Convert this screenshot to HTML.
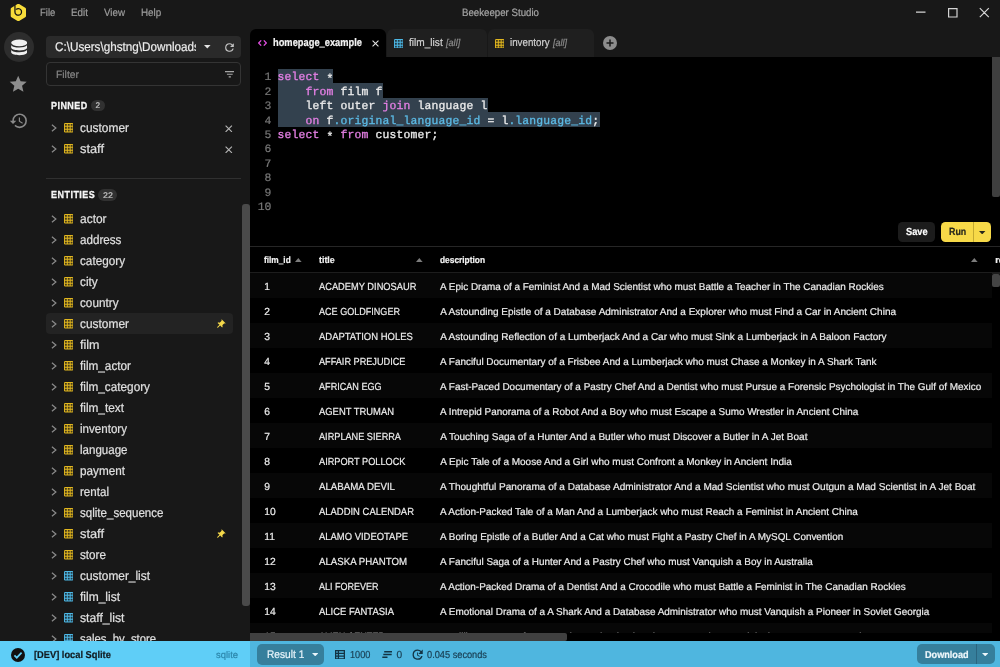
<!DOCTYPE html>
<html><head><meta charset="utf-8"><title>Beekeeper Studio</title>
<style>
*{box-sizing:border-box;margin:0;padding:0}
html,body{width:1000px;height:667px;overflow:hidden;background:#181818;font-family:"Liberation Sans",sans-serif;color:#e6e6e6}
.abs{position:absolute}
.t{position:absolute;white-space:pre;line-height:1;-webkit-text-stroke:.2px;text-rendering:geometricPrecision}
#app{position:relative;width:1000px;height:667px;overflow:hidden;background:#181818;will-change:transform}
.ln{position:absolute;left:250px;width:21.3px;text-align:right;font-family:"Liberation Mono",monospace;font-size:11.4px;line-height:1;color:#787878;text-rendering:geometricPrecision;-webkit-text-stroke:.2px}
.cl{position:absolute;left:277.5px;font-family:"Liberation Mono",monospace;font-size:11.4px;letter-spacing:.16px;line-height:1;color:#ececec;white-space:pre;text-rendering:geometricPrecision;-webkit-text-stroke:.3px}
.sel{position:absolute;left:277.5px;background:#33414e}
.k{color:#e680e6}
.as{position:relative;top:2.2px}
.p{color:#5cbbe6}
</style></head>
<body><div id="app">
<!-- title bar -->
<svg class="abs" style="left:10px;top:3px" width="17" height="19" viewBox="0 0 17 19"><path d="M8.350 2.400L14.500 5.950V13.050L8.350 16.600L2.200 13.050V5.950Z" fill="#f7dc3a" stroke="#f7dc3a" stroke-width="3" stroke-linejoin="round"/><path d="M4.950 2.500V8.900A3.300 3.300 0 1 0 6.360 6.200" stroke="#121212" stroke-width="1.250" fill="none" stroke-linecap="round"/></svg>
<span class="t" style="left:39.70px;top:8px;font-size:10.6px;transform:scaleX(0.8959);transform-origin:0 0;color:#9c9c9c;">File</span><span class="t" style="left:70.90px;top:8px;font-size:10.6px;transform:scaleX(0.9252);transform-origin:0 0;color:#9c9c9c;">Edit</span><span class="t" style="left:104.00px;top:8px;font-size:10.6px;transform:scaleX(0.9218);transform-origin:0 0;color:#9c9c9c;">View</span><span class="t" style="left:141.20px;top:8px;font-size:10.6px;transform:scaleX(0.9313);transform-origin:0 0;color:#9c9c9c;">Help</span>
<span class="t" style="left:461.60px;top:8px;font-size:10.6px;transform:scaleX(0.9141);transform-origin:0 0;color:#a6a6a6;">Beekeeper Studio</span>
<svg class="abs" style="left:912px;top:4px" width="84" height="18" viewBox="0 0 84 18"><path d="M4 8.100h9.500M36.600 4.600h8.400v8.400h-8.400zM67.800 4.200l9 9M76.800 4.200l-9 9" fill="none" stroke="#d4d4d4" stroke-width="1.200"/></svg>
<!-- rail -->
<div class="abs" style="left:3.500px;top:32px;width:30px;height:30px;border-radius:15px;background:#2d2d2d"></div>
<svg class="abs" style="left:10.500px;top:39px" width="16.500" height="17" viewBox="0 0 17 17"><g fill="#f0f0f0"><ellipse cx="8.500" cy="3.700" rx="8.300" ry="3.500"/><path d="M.2 5.800c1 2 4.600 2.700 8.300 2.700s7.300-.7 8.300-2.700v3c-1 2-4.600 2.700-8.300 2.700s-7.300-.7-8.300-2.700z"/><path d="M.2 10.700c1 2 4.600 2.700 8.300 2.700s7.300-.7 8.300-2.700v3c-1 2-4.600 2.700-8.300 2.700s-7.300-.7-8.300-2.700z"/></g></svg>
<svg class="abs" style="left:8.300px;top:73.500px" width="20.400" height="20.400" viewBox="0 0 24 24"><path fill="#8e8e8e" d="M12 17.270L18.180 21l-1.640-7.030L22 9.240l-7.190-.61L12 2 9.190 8.630 2 9.240l5.460 4.730L5.820 21z"/></svg>
<svg class="abs" style="left:9px;top:110.800px" width="19.600" height="19.600" viewBox="0 0 24 24"><path fill="#8a8a8a" d="M13 3a9 9 0 0 0-9 9H1l3.890 3.890.07.140L9 12H6c0-3.870 3.130-7 7-7s7 3.130 7 7-3.130 7-7 7c-1.930 0-3.680-.79-4.940-2.060l-1.420 1.420A8.954 8.954 0 0 0 13 21a9 9 0 0 0 0-18zm-1 5v5l4.280 2.540.72-1.210-3.500-2.080V8H12z"/></svg>
<!-- sidebar -->
<div class="abs" style="left:46.300px;top:36px;width:194.700px;height:21.800px;border-radius:4px;background:#2a2a2a"></div>
<div class="abs" style="left:54px;top:38px;width:141.900px;height:18px;overflow:hidden"><span class="t" style="left:0.70px;top:3px;font-size:12.7px;transform:scaleX(0.9214);transform-origin:0 0;color:#ececec;">C:\Users\ghstng\Downloads</span></div>
<svg class="abs" style="left:204.200px;top:45px" width="6.600" height="3.600" viewBox="0 0 8 4.400"><path d="M0 0h8L4 4.400z" fill="#e4e4e4"/></svg>
<svg class="abs" style="left:223px;top:40.500px" width="13" height="13" viewBox="0 0 24 24"><path fill="#c4c4c4" d="M17.650 6.350A7.958 7.958 0 0 0 12 4a8 8 0 1 0 7.730 10h-2.080A5.990 5.990 0 0 1 12 18c-3.310 0-6-2.690-6-6s2.690-6 6-6c1.660 0 3.140.69 4.220 1.780L13 11h7V4l-2.350 2.350z"/></svg>
<div class="abs" style="left:46.300px;top:62.300px;width:194.700px;height:23.500px;border:1px solid #343434;border-radius:4px;background:#181818"></div>
<span class="t" style="left:55.70px;top:70px;font-size:10.5px;transform:scaleX(0.9853);transform-origin:0 0;color:#858585;">Filter</span>
<svg class="abs" style="left:224.800px;top:71px" width="9.600" height="6.500" viewBox="0 0 9.600 6.500"><path d="M0 .600h9.600M1.900 3.250h5.800M3.700 5.900h2.200" stroke="#a6a6a6" stroke-width="1.200" fill="none"/></svg>
<span class="t" style="left:51.00px;top:102px;font-size:10.2px;color:#f6f6f6;font-weight:bold;-webkit-text-stroke:.3px;letter-spacing:.53px;transform:scaleX(.88);transform-origin:0 0;">PINNED</span>
<div class="abs" style="left:90.800px;top:99.600px;width:14.200px;height:11.600px;border-radius:5.800px;background:#313131"></div>
<span class="t" style="left:95.50px;top:102px;font-size:8.2px;color:#c4c4c4;">2</span>
<svg class="abs" style="left:51px;top:124.2px" viewBox="0 0 6 8" width="6" height="8"><path d="M.9 .700l4 3.300-4 3.300" fill="none" stroke="#8c8c8c" stroke-width="1.2"/></svg><svg class="abs" style="left:63.8px;top:123.4px" viewBox="0 0 20 20" width="9.5" height="9.5"><rect x="0" y="0" width="20" height="20" rx="2.500" fill="#e2b71f"/><path d="M2 2h4v4h-4zM2 8h4v4h-4zM2 14h4v4h-4zM8 2h4v4h-4zM8 8h4v4h-4zM8 14h4v4h-4zM14 2h4v4h-4zM14 8h4v4h-4zM14 14h4v4h-4z" fill="#181818" fill-opacity=".78"/></svg><span class="t" style="left:80.00px;top:122px;font-size:12.7px;transform:scaleX(0.9389);transform-origin:0 0;color:#e0e0e0;">customer</span><svg class="abs" style="left:225px;top:124.7px" viewBox="0 0 10 10" width="7.5" height="7.5"><path d="M.8 .800l8.400 8.400M9.200 .800L.8 9.200" stroke="#b4b4b4" stroke-width="1.500" fill="none"/></svg>

<svg class="abs" style="left:51px;top:145.1px" viewBox="0 0 6 8" width="6" height="8"><path d="M.9 .700l4 3.300-4 3.300" fill="none" stroke="#8c8c8c" stroke-width="1.2"/></svg><svg class="abs" style="left:63.8px;top:144.3px" viewBox="0 0 20 20" width="9.5" height="9.5"><rect x="0" y="0" width="20" height="20" rx="2.500" fill="#e2b71f"/><path d="M2 2h4v4h-4zM2 8h4v4h-4zM2 14h4v4h-4zM8 2h4v4h-4zM8 8h4v4h-4zM8 14h4v4h-4zM14 2h4v4h-4zM14 8h4v4h-4zM14 14h4v4h-4z" fill="#181818" fill-opacity=".78"/></svg><span class="t" style="left:80.00px;top:143px;font-size:12.7px;transform:scaleX(1.0105);transform-origin:0 0;color:#e0e0e0;">staff</span><svg class="abs" style="left:225px;top:145.6px" viewBox="0 0 10 10" width="7.5" height="7.5"><path d="M.8 .800l8.400 8.400M9.200 .800L.8 9.200" stroke="#b4b4b4" stroke-width="1.500" fill="none"/></svg>

<div class="abs" style="left:46px;top:177.600px;width:195px;height:1px;background:#303030"></div>
<span class="t" style="left:50.80px;top:191px;font-size:10.2px;color:#f6f6f6;font-weight:bold;-webkit-text-stroke:.3px;letter-spacing:.56px;transform:scaleX(.88);transform-origin:0 0;">ENTITIES</span>
<div class="abs" style="left:98.200px;top:188.800px;width:19px;height:11.800px;border-radius:5.900px;background:#313131"></div>
<span class="t" style="left:103.00px;top:192px;font-size:8.2px;transform:scaleX(1.0758);transform-origin:0 0;color:#c4c4c4;">22</span>
<div class="abs" style="left:37px;top:205px;width:205px;height:436px;overflow:hidden"><div class="abs" style="left:-37px;top:-205px;width:250px;height:667px">
<svg class="abs" style="left:51px;top:215px" viewBox="0 0 6 8" width="6" height="8"><path d="M.9 .700l4 3.300-4 3.300" fill="none" stroke="#8c8c8c" stroke-width="1.2"/></svg><svg class="abs" style="left:63.8px;top:214.2px" viewBox="0 0 20 20" width="9.5" height="9.5"><rect x="0" y="0" width="20" height="20" rx="2.500" fill="#e2b71f"/><path d="M2 2h4v4h-4zM2 8h4v4h-4zM2 14h4v4h-4zM8 2h4v4h-4zM8 8h4v4h-4zM8 14h4v4h-4zM14 2h4v4h-4zM14 8h4v4h-4zM14 14h4v4h-4z" fill="#181818" fill-opacity=".78"/></svg><span class="t" style="left:80.00px;top:213px;font-size:12.7px;transform:scaleX(0.9426);transform-origin:0 0;color:#e0e0e0;">actor</span>
<svg class="abs" style="left:51px;top:236px" viewBox="0 0 6 8" width="6" height="8"><path d="M.9 .700l4 3.300-4 3.300" fill="none" stroke="#8c8c8c" stroke-width="1.2"/></svg><svg class="abs" style="left:63.8px;top:235.2px" viewBox="0 0 20 20" width="9.5" height="9.5"><rect x="0" y="0" width="20" height="20" rx="2.500" fill="#e2b71f"/><path d="M2 2h4v4h-4zM2 8h4v4h-4zM2 14h4v4h-4zM8 2h4v4h-4zM8 8h4v4h-4zM8 14h4v4h-4zM14 2h4v4h-4zM14 8h4v4h-4zM14 14h4v4h-4z" fill="#181818" fill-opacity=".78"/></svg><span class="t" style="left:80.00px;top:234px;font-size:12.7px;transform:scaleX(0.9171);transform-origin:0 0;color:#e0e0e0;">address</span>
<svg class="abs" style="left:51px;top:257px" viewBox="0 0 6 8" width="6" height="8"><path d="M.9 .700l4 3.300-4 3.300" fill="none" stroke="#8c8c8c" stroke-width="1.2"/></svg><svg class="abs" style="left:63.8px;top:256.2px" viewBox="0 0 20 20" width="9.5" height="9.5"><rect x="0" y="0" width="20" height="20" rx="2.500" fill="#e2b71f"/><path d="M2 2h4v4h-4zM2 8h4v4h-4zM2 14h4v4h-4zM8 2h4v4h-4zM8 8h4v4h-4zM8 14h4v4h-4zM14 2h4v4h-4zM14 8h4v4h-4zM14 14h4v4h-4z" fill="#181818" fill-opacity=".78"/></svg><span class="t" style="left:80.00px;top:255px;font-size:12.7px;transform:scaleX(0.9246);transform-origin:0 0;color:#e0e0e0;">category</span>
<svg class="abs" style="left:51px;top:278px" viewBox="0 0 6 8" width="6" height="8"><path d="M.9 .700l4 3.300-4 3.300" fill="none" stroke="#8c8c8c" stroke-width="1.2"/></svg><svg class="abs" style="left:63.8px;top:277.2px" viewBox="0 0 20 20" width="9.5" height="9.5"><rect x="0" y="0" width="20" height="20" rx="2.500" fill="#e2b71f"/><path d="M2 2h4v4h-4zM2 8h4v4h-4zM2 14h4v4h-4zM8 2h4v4h-4zM8 8h4v4h-4zM8 14h4v4h-4zM14 2h4v4h-4zM14 8h4v4h-4zM14 14h4v4h-4z" fill="#181818" fill-opacity=".78"/></svg><span class="t" style="left:80.00px;top:276px;font-size:12.7px;transform:scaleX(0.9327);transform-origin:0 0;color:#e0e0e0;">city</span>
<svg class="abs" style="left:51px;top:299px" viewBox="0 0 6 8" width="6" height="8"><path d="M.9 .700l4 3.300-4 3.300" fill="none" stroke="#8c8c8c" stroke-width="1.2"/></svg><svg class="abs" style="left:63.8px;top:298.2px" viewBox="0 0 20 20" width="9.5" height="9.5"><rect x="0" y="0" width="20" height="20" rx="2.500" fill="#e2b71f"/><path d="M2 2h4v4h-4zM2 8h4v4h-4zM2 14h4v4h-4zM8 2h4v4h-4zM8 8h4v4h-4zM8 14h4v4h-4zM14 2h4v4h-4zM14 8h4v4h-4zM14 14h4v4h-4z" fill="#181818" fill-opacity=".78"/></svg><span class="t" style="left:80.00px;top:297px;font-size:12.7px;transform:scaleX(0.9253);transform-origin:0 0;color:#e0e0e0;">country</span>
<div class="abs" style="left:46px;top:313px;width:187px;height:21.300px;border-radius:4px;background:#232323"></div><svg class="abs" style="left:51px;top:320px" viewBox="0 0 6 8" width="6" height="8"><path d="M.9 .700l4 3.300-4 3.300" fill="none" stroke="#8c8c8c" stroke-width="1.2"/></svg><svg class="abs" style="left:63.8px;top:319.2px" viewBox="0 0 20 20" width="9.5" height="9.5"><rect x="0" y="0" width="20" height="20" rx="2.500" fill="#e2b71f"/><path d="M2 2h4v4h-4zM2 8h4v4h-4zM2 14h4v4h-4zM8 2h4v4h-4zM8 8h4v4h-4zM8 14h4v4h-4zM14 2h4v4h-4zM14 8h4v4h-4zM14 14h4v4h-4z" fill="#181818" fill-opacity=".78"/></svg><span class="t" style="left:80.00px;top:318px;font-size:12.7px;transform:scaleX(0.9389);transform-origin:0 0;color:#e0e0e0;">customer</span><svg class="abs" style="left:215px;top:319px" viewBox="0 0 24 24" width="11" height="11"><path fill="#f5d94a" transform="rotate(45 12 12)" d="M16 9V4h1c.55 0 1-.45 1-1s-.45-1-1-1H7c-.55 0-1 .45-1 1s.45 1 1 1h1v5c0 1.660-1.340 3-3 3v2h5.970v7l1 1 1-1v-7H19v-2c-1.660 0-3-1.340-3-3z"/></svg>
<svg class="abs" style="left:51px;top:341px" viewBox="0 0 6 8" width="6" height="8"><path d="M.9 .700l4 3.300-4 3.300" fill="none" stroke="#8c8c8c" stroke-width="1.2"/></svg><svg class="abs" style="left:63.8px;top:340.2px" viewBox="0 0 20 20" width="9.5" height="9.5"><rect x="0" y="0" width="20" height="20" rx="2.500" fill="#e2b71f"/><path d="M2 2h4v4h-4zM2 8h4v4h-4zM2 14h4v4h-4zM8 2h4v4h-4zM8 8h4v4h-4zM8 14h4v4h-4zM14 2h4v4h-4zM14 8h4v4h-4zM14 14h4v4h-4z" fill="#181818" fill-opacity=".78"/></svg><span class="t" style="left:80.00px;top:339px;font-size:12.7px;transform:scaleX(0.9881);transform-origin:0 0;color:#e0e0e0;">film</span>
<svg class="abs" style="left:51px;top:362px" viewBox="0 0 6 8" width="6" height="8"><path d="M.9 .700l4 3.300-4 3.300" fill="none" stroke="#8c8c8c" stroke-width="1.2"/></svg><svg class="abs" style="left:63.8px;top:361.2px" viewBox="0 0 20 20" width="9.5" height="9.5"><rect x="0" y="0" width="20" height="20" rx="2.500" fill="#e2b71f"/><path d="M2 2h4v4h-4zM2 8h4v4h-4zM2 14h4v4h-4zM8 2h4v4h-4zM8 8h4v4h-4zM8 14h4v4h-4zM14 2h4v4h-4zM14 8h4v4h-4zM14 14h4v4h-4z" fill="#181818" fill-opacity=".78"/></svg><span class="t" style="left:80.00px;top:360px;font-size:12.7px;transform:scaleX(0.9273);transform-origin:0 0;color:#e0e0e0;">film_actor</span>
<svg class="abs" style="left:51px;top:383px" viewBox="0 0 6 8" width="6" height="8"><path d="M.9 .700l4 3.300-4 3.300" fill="none" stroke="#8c8c8c" stroke-width="1.2"/></svg><svg class="abs" style="left:63.8px;top:382.2px" viewBox="0 0 20 20" width="9.5" height="9.5"><rect x="0" y="0" width="20" height="20" rx="2.500" fill="#e2b71f"/><path d="M2 2h4v4h-4zM2 8h4v4h-4zM2 14h4v4h-4zM8 2h4v4h-4zM8 8h4v4h-4zM8 14h4v4h-4zM14 2h4v4h-4zM14 8h4v4h-4zM14 14h4v4h-4z" fill="#181818" fill-opacity=".78"/></svg><span class="t" style="left:80.00px;top:381px;font-size:12.7px;transform:scaleX(0.9277);transform-origin:0 0;color:#e0e0e0;">film_category</span>
<svg class="abs" style="left:51px;top:404px" viewBox="0 0 6 8" width="6" height="8"><path d="M.9 .700l4 3.300-4 3.300" fill="none" stroke="#8c8c8c" stroke-width="1.2"/></svg><svg class="abs" style="left:63.8px;top:403.2px" viewBox="0 0 20 20" width="9.5" height="9.5"><rect x="0" y="0" width="20" height="20" rx="2.500" fill="#e2b71f"/><path d="M2 2h4v4h-4zM2 8h4v4h-4zM2 14h4v4h-4zM8 2h4v4h-4zM8 8h4v4h-4zM8 14h4v4h-4zM14 2h4v4h-4zM14 8h4v4h-4zM14 14h4v4h-4z" fill="#181818" fill-opacity=".78"/></svg><span class="t" style="left:80.00px;top:402px;font-size:12.7px;transform:scaleX(0.9312);transform-origin:0 0;color:#e0e0e0;">film_text</span>
<svg class="abs" style="left:51px;top:425px" viewBox="0 0 6 8" width="6" height="8"><path d="M.9 .700l4 3.300-4 3.300" fill="none" stroke="#8c8c8c" stroke-width="1.2"/></svg><svg class="abs" style="left:63.8px;top:424.2px" viewBox="0 0 20 20" width="9.5" height="9.5"><rect x="0" y="0" width="20" height="20" rx="2.500" fill="#e2b71f"/><path d="M2 2h4v4h-4zM2 8h4v4h-4zM2 14h4v4h-4zM8 2h4v4h-4zM8 8h4v4h-4zM8 14h4v4h-4zM14 2h4v4h-4zM14 8h4v4h-4zM14 14h4v4h-4z" fill="#181818" fill-opacity=".78"/></svg><span class="t" style="left:80.00px;top:423px;font-size:12.7px;transform:scaleX(0.9129);transform-origin:0 0;color:#e0e0e0;">inventory</span>
<svg class="abs" style="left:51px;top:446px" viewBox="0 0 6 8" width="6" height="8"><path d="M.9 .700l4 3.300-4 3.300" fill="none" stroke="#8c8c8c" stroke-width="1.2"/></svg><svg class="abs" style="left:63.8px;top:445.2px" viewBox="0 0 20 20" width="9.5" height="9.5"><rect x="0" y="0" width="20" height="20" rx="2.500" fill="#e2b71f"/><path d="M2 2h4v4h-4zM2 8h4v4h-4zM2 14h4v4h-4zM8 2h4v4h-4zM8 8h4v4h-4zM8 14h4v4h-4zM14 2h4v4h-4zM14 8h4v4h-4zM14 14h4v4h-4z" fill="#181818" fill-opacity=".78"/></svg><span class="t" style="left:80.00px;top:444px;font-size:12.7px;transform:scaleX(0.9096);transform-origin:0 0;color:#e0e0e0;">language</span>
<svg class="abs" style="left:51px;top:467px" viewBox="0 0 6 8" width="6" height="8"><path d="M.9 .700l4 3.300-4 3.300" fill="none" stroke="#8c8c8c" stroke-width="1.2"/></svg><svg class="abs" style="left:63.8px;top:466.2px" viewBox="0 0 20 20" width="9.5" height="9.5"><rect x="0" y="0" width="20" height="20" rx="2.500" fill="#e2b71f"/><path d="M2 2h4v4h-4zM2 8h4v4h-4zM2 14h4v4h-4zM8 2h4v4h-4zM8 8h4v4h-4zM8 14h4v4h-4zM14 2h4v4h-4zM14 8h4v4h-4zM14 14h4v4h-4z" fill="#181818" fill-opacity=".78"/></svg><span class="t" style="left:80.00px;top:465px;font-size:12.7px;transform:scaleX(0.9246);transform-origin:0 0;color:#e0e0e0;">payment</span>
<svg class="abs" style="left:51px;top:488px" viewBox="0 0 6 8" width="6" height="8"><path d="M.9 .700l4 3.300-4 3.300" fill="none" stroke="#8c8c8c" stroke-width="1.2"/></svg><svg class="abs" style="left:63.8px;top:487.2px" viewBox="0 0 20 20" width="9.5" height="9.5"><rect x="0" y="0" width="20" height="20" rx="2.500" fill="#e2b71f"/><path d="M2 2h4v4h-4zM2 8h4v4h-4zM2 14h4v4h-4zM8 2h4v4h-4zM8 8h4v4h-4zM8 14h4v4h-4zM14 2h4v4h-4zM14 8h4v4h-4zM14 14h4v4h-4z" fill="#181818" fill-opacity=".78"/></svg><span class="t" style="left:80.00px;top:486px;font-size:12.7px;transform:scaleX(0.9134);transform-origin:0 0;color:#e0e0e0;">rental</span>
<svg class="abs" style="left:51px;top:509px" viewBox="0 0 6 8" width="6" height="8"><path d="M.9 .700l4 3.300-4 3.300" fill="none" stroke="#8c8c8c" stroke-width="1.2"/></svg><svg class="abs" style="left:63.8px;top:508.2px" viewBox="0 0 20 20" width="9.5" height="9.5"><rect x="0" y="0" width="20" height="20" rx="2.500" fill="#e2b71f"/><path d="M2 2h4v4h-4zM2 8h4v4h-4zM2 14h4v4h-4zM8 2h4v4h-4zM8 8h4v4h-4zM8 14h4v4h-4zM14 2h4v4h-4zM14 8h4v4h-4zM14 14h4v4h-4z" fill="#181818" fill-opacity=".78"/></svg><span class="t" style="left:80.00px;top:507px;font-size:12.7px;transform:scaleX(0.9105);transform-origin:0 0;color:#e0e0e0;">sqlite_sequence</span>
<svg class="abs" style="left:51px;top:530px" viewBox="0 0 6 8" width="6" height="8"><path d="M.9 .700l4 3.300-4 3.300" fill="none" stroke="#8c8c8c" stroke-width="1.2"/></svg><svg class="abs" style="left:63.8px;top:529.2px" viewBox="0 0 20 20" width="9.5" height="9.5"><rect x="0" y="0" width="20" height="20" rx="2.500" fill="#e2b71f"/><path d="M2 2h4v4h-4zM2 8h4v4h-4zM2 14h4v4h-4zM8 2h4v4h-4zM8 8h4v4h-4zM8 14h4v4h-4zM14 2h4v4h-4zM14 8h4v4h-4zM14 14h4v4h-4z" fill="#181818" fill-opacity=".78"/></svg><span class="t" style="left:80.00px;top:528px;font-size:12.7px;transform:scaleX(1.0105);transform-origin:0 0;color:#e0e0e0;">staff</span><svg class="abs" style="left:215px;top:529px" viewBox="0 0 24 24" width="11" height="11"><path fill="#f5d94a" transform="rotate(45 12 12)" d="M16 9V4h1c.55 0 1-.45 1-1s-.45-1-1-1H7c-.55 0-1 .45-1 1s.45 1 1 1h1v5c0 1.660-1.340 3-3 3v2h5.970v7l1 1 1-1v-7H19v-2c-1.660 0-3-1.340-3-3z"/></svg>
<svg class="abs" style="left:51px;top:551px" viewBox="0 0 6 8" width="6" height="8"><path d="M.9 .700l4 3.300-4 3.300" fill="none" stroke="#8c8c8c" stroke-width="1.2"/></svg><svg class="abs" style="left:63.8px;top:550.2px" viewBox="0 0 20 20" width="9.5" height="9.5"><rect x="0" y="0" width="20" height="20" rx="2.500" fill="#e2b71f"/><path d="M2 2h4v4h-4zM2 8h4v4h-4zM2 14h4v4h-4zM8 2h4v4h-4zM8 8h4v4h-4zM8 14h4v4h-4zM14 2h4v4h-4zM14 8h4v4h-4zM14 14h4v4h-4z" fill="#181818" fill-opacity=".78"/></svg><span class="t" style="left:80.00px;top:549px;font-size:12.7px;transform:scaleX(0.9214);transform-origin:0 0;color:#e0e0e0;">store</span>
<svg class="abs" style="left:51px;top:572px" viewBox="0 0 6 8" width="6" height="8"><path d="M.9 .700l4 3.300-4 3.300" fill="none" stroke="#8c8c8c" stroke-width="1.2"/></svg><svg class="abs" style="left:63.8px;top:571.2px" viewBox="0 0 20 20" width="9.5" height="9.5"><rect x="0" y="0" width="20" height="20" rx="2.500" fill="#4db8e6"/><path d="M2 2h4v4h-4zM2 8h4v4h-4zM2 14h4v4h-4zM8 2h4v4h-4zM8 8h4v4h-4zM8 14h4v4h-4zM14 2h4v4h-4zM14 8h4v4h-4zM14 14h4v4h-4z" fill="#181818" fill-opacity=".78"/></svg><span class="t" style="left:80.00px;top:570px;font-size:12.7px;transform:scaleX(0.9365);transform-origin:0 0;color:#e0e0e0;">customer_list</span>
<svg class="abs" style="left:51px;top:593px" viewBox="0 0 6 8" width="6" height="8"><path d="M.9 .700l4 3.300-4 3.300" fill="none" stroke="#8c8c8c" stroke-width="1.2"/></svg><svg class="abs" style="left:63.8px;top:592.2px" viewBox="0 0 20 20" width="9.5" height="9.5"><rect x="0" y="0" width="20" height="20" rx="2.500" fill="#4db8e6"/><path d="M2 2h4v4h-4zM2 8h4v4h-4zM2 14h4v4h-4zM8 2h4v4h-4zM8 8h4v4h-4zM8 14h4v4h-4zM14 2h4v4h-4zM14 8h4v4h-4zM14 14h4v4h-4z" fill="#181818" fill-opacity=".78"/></svg><span class="t" style="left:80.00px;top:591px;font-size:12.7px;transform:scaleX(0.9457);transform-origin:0 0;color:#e0e0e0;">film_list</span>
<svg class="abs" style="left:51px;top:614px" viewBox="0 0 6 8" width="6" height="8"><path d="M.9 .700l4 3.300-4 3.300" fill="none" stroke="#8c8c8c" stroke-width="1.2"/></svg><svg class="abs" style="left:63.8px;top:613.2px" viewBox="0 0 20 20" width="9.5" height="9.5"><rect x="0" y="0" width="20" height="20" rx="2.500" fill="#4db8e6"/><path d="M2 2h4v4h-4zM2 8h4v4h-4zM2 14h4v4h-4zM8 2h4v4h-4zM8 8h4v4h-4zM8 14h4v4h-4zM14 2h4v4h-4zM14 8h4v4h-4zM14 14h4v4h-4z" fill="#181818" fill-opacity=".78"/></svg><span class="t" style="left:80.00px;top:612px;font-size:12.7px;transform:scaleX(0.9609);transform-origin:0 0;color:#e0e0e0;">staff_list</span>
<svg class="abs" style="left:51px;top:635px" viewBox="0 0 6 8" width="6" height="8"><path d="M.9 .700l4 3.300-4 3.300" fill="none" stroke="#8c8c8c" stroke-width="1.2"/></svg><svg class="abs" style="left:63.8px;top:634.2px" viewBox="0 0 20 20" width="9.5" height="9.5"><rect x="0" y="0" width="20" height="20" rx="2.500" fill="#4db8e6"/><path d="M2 2h4v4h-4zM2 8h4v4h-4zM2 14h4v4h-4zM8 2h4v4h-4zM8 8h4v4h-4zM8 14h4v4h-4zM14 2h4v4h-4zM14 8h4v4h-4zM14 14h4v4h-4z" fill="#181818" fill-opacity=".78"/></svg><span class="t" style="left:80.00px;top:633px;font-size:12.7px;transform:scaleX(0.8905);transform-origin:0 0;color:#e0e0e0;">sales_by_store</span>

</div></div>
<div class="abs" style="left:242.200px;top:203.700px;width:7.800px;height:402.500px;border-radius:3px;background:#4a4a4a"></div>
<!-- main -->
<div class="abs" style="left:250px;top:29px;width:750px;height:612px;background:#000"></div>
<div class="abs" style="left:250px;top:29px;width:750px;height:28px;background:#181818"></div>
<div class="abs" style="left:250px;top:29px;width:136px;height:28px;border-radius:6px 6px 0 0;background:#000"></div>
<svg class="abs" style="left:258px;top:40.200px" width="9" height="6" viewBox="0 0 9 6"><path d="M3.200 .400L.7 3l2.500 2.600M5.800 .400L8.300 3 5.800 5.600" fill="none" stroke="#e04fe0" stroke-width="1.250"/></svg>
<span class="t" style="left:273.00px;top:38px;font-size:11px;transform:scaleX(0.8464);transform-origin:0 0;color:#f4f4f4;font-weight:bold;">homepage_example</span>
<svg class="abs" style="left:372px;top:39.8px" viewBox="0 0 10 10" width="7" height="7"><path d="M.8 .800l8.400 8.400M9.200 .800L.8 9.200" stroke="#e2e2e2" stroke-width="1.500" fill="none"/></svg>
<div class="abs" style="left:387px;top:29px;width:99.500px;height:27.500px;border-radius:6px 6px 0 0;background:#1f1f1f"></div>
<svg class="abs" style="left:393.7px;top:38.5px" viewBox="0 0 20 20" width="9.5" height="9.5"><rect x="0" y="0" width="20" height="20" rx="2.500" fill="#4db8e6"/><path d="M2 2h4v4h-4zM2 8h4v4h-4zM2 14h4v4h-4zM8 2h4v4h-4zM8 8h4v4h-4zM8 14h4v4h-4zM14 2h4v4h-4zM14 8h4v4h-4zM14 14h4v4h-4z" fill="#181818" fill-opacity=".78"/></svg>
<span class="t" style="left:409.30px;top:38px;font-size:11px;transform:scaleX(0.9190);transform-origin:0 0;color:#d2d2d2;">film_list</span><span class="t" style="left:446.30px;top:39px;font-size:10px;transform:scaleX(0.9124);transform-origin:0 0;color:#8c8c8c;font-style:italic;">[all]</span>
<div class="abs" style="left:488px;top:29px;width:105.600px;height:27.500px;border-radius:6px 6px 0 0;background:#1f1f1f"></div>
<svg class="abs" style="left:494.9px;top:38.5px" viewBox="0 0 20 20" width="9.5" height="9.5"><rect x="0" y="0" width="20" height="20" rx="2.500" fill="#e2b71f"/><path d="M2 2h4v4h-4zM2 8h4v4h-4zM2 14h4v4h-4zM8 2h4v4h-4zM8 8h4v4h-4zM8 14h4v4h-4zM14 2h4v4h-4zM14 8h4v4h-4zM14 14h4v4h-4z" fill="#181818" fill-opacity=".78"/></svg>
<span class="t" style="left:510.40px;top:38px;font-size:11px;transform:scaleX(0.8871);transform-origin:0 0;color:#d2d2d2;">inventory</span><span class="t" style="left:553.20px;top:39px;font-size:10px;transform:scaleX(0.8996);transform-origin:0 0;color:#8c8c8c;font-style:italic;">[all]</span>
<svg class="abs" style="left:603px;top:36px" width="14" height="14" viewBox="0 0 14 14"><circle cx="7" cy="7" r="7" fill="#8c8c8c"/><path d="M7 3.500v7M3.500 7h7" stroke="#1a1a1a" stroke-width="1.500"/></svg>
<!-- editor -->
<div class="sel" style="top:68.700px;width:55.800px;height:14.500px"></div>
<div class="sel" style="top:83.100px;width:105.100px;height:14.500px"></div>
<div class="sel" style="top:97.500px;width:210px;height:14.500px"></div>
<div class="sel" style="top:111.900px;width:322.500px;height:14.850px"></div>
<div class="ln" style="top:73px">1</div><div class="ln" style="top:88px">2</div><div class="ln" style="top:102px">3</div><div class="ln" style="top:117px">4</div><div class="ln" style="top:131px">5</div><div class="ln" style="top:145px">6</div><div class="ln" style="top:160px">7</div><div class="ln" style="top:174px">8</div><div class="ln" style="top:189px">9</div><div class="ln" style="top:203px">10</div>
<div class="cl" style="top:73px"><span class="k">select</span> <span class="as">*</span></div>
<div class="cl" style="top:88px">    <span class="k">from</span> film f</div>
<div class="cl" style="top:102px">    left outer <span class="k">join</span> language l</div>
<div class="cl" style="top:117px">    <span class="k">on</span> f<span class="p">.original_language_id</span> = l<span class="p">.language_id</span>;</div>
<div class="cl" style="top:131px"><span class="k">select</span> <span class="as">*</span> <span class="k">from</span> customer;</div>
<div class="abs" style="left:992.200px;top:57px;width:7.800px;height:140px;background:#3f3f3f;border-radius:0 0 2px 2px"></div>
<div class="abs" style="left:898px;top:222px;width:37px;height:19.800px;border-radius:4.500px;background:#1c1c1c"></div>
<span class="t" style="left:905.80px;top:228px;font-size:10.4px;transform:scaleX(0.8896);transform-origin:0 0;color:#ffffff;font-weight:bold;">Save</span>
<div class="abs" style="left:940.800px;top:222px;width:50.200px;height:19.800px;border-radius:4.500px;background:#f7d948"></div>
<div class="abs" style="left:973.100px;top:222px;width:1px;height:19.800px;background:#c4aa30"></div>
<span class="t" style="left:948.60px;top:228px;font-size:10.4px;transform:scaleX(0.8514);transform-origin:0 0;color:#26261c;font-weight:bold;">Run</span>
<svg class="abs" style="left:979.300px;top:230.500px" width="6.400" height="3.400" viewBox="0 0 8 4.250"><path d="M0 0h8L4 4.250z" fill="#26261c"/></svg>
<!-- results -->
<div class="abs" style="left:250px;top:245.600px;width:750px;height:1px;background:#262626"></div>
<span class="t" style="left:264.30px;top:256px;font-size:9.3px;transform:scaleX(0.8909);transform-origin:0 0;color:#f2f2f2;font-weight:bold;">film_id</span>
<span class="t" style="left:319.30px;top:256px;font-size:9.3px;transform:scaleX(0.9497);transform-origin:0 0;color:#f2f2f2;font-weight:bold;">title</span>
<span class="t" style="left:440.20px;top:256px;font-size:9.3px;transform:scaleX(0.8980);transform-origin:0 0;color:#f2f2f2;font-weight:bold;">description</span>
<span class="t" style="left:995.20px;top:256px;font-size:9.3px;color:#f2f2f2;font-weight:bold;">re</span>
<svg class="abs" style="left:295.400px;top:258.300px" width="6.600" height="3.900" viewBox="0 0 8 4.100" preserveAspectRatio="none"><path d="M0 4.100h8L4 0z" fill="#7c7c7c"/></svg>
<svg class="abs" style="left:416.400px;top:258.300px" width="6.600" height="3.900" viewBox="0 0 8 4.100" preserveAspectRatio="none"><path d="M0 4.100h8L4 0z" fill="#7c7c7c"/></svg>
<svg class="abs" style="left:971px;top:258.300px" width="6.600" height="3.900" viewBox="0 0 8 4.100" preserveAspectRatio="none"><path d="M0 4.100h8L4 0z" fill="#7c7c7c"/></svg>
<div class="abs" style="left:250px;top:272px;width:750px;height:2px;background:#1d1d1d"></div>
<div class="abs" style="left:250px;top:273px;width:750px;height:368px;overflow:hidden"><div class="abs" style="left:-250px;top:-273px;width:1000px;height:667px">
<div class="abs" style="left:250px;top:273px;width:742px;height:25px;background:#070707"></div><span class="t" style="left:264.30px;top:283px;font-size:10.3px;color:#ececec;">1</span><span class="t" style="left:319.30px;top:283px;font-size:10.3px;transform:scaleX(0.9022);transform-origin:0 0;color:#ececec;">ACADEMY DINOSAUR</span><span class="t" style="left:440.20px;top:283px;font-size:10px;transform:scaleX(0.9927);transform-origin:0 0;color:#ececec;">A Epic Drama of a Feminist And a Mad Scientist who must Battle a Teacher in The Canadian Rockies</span>
<div class="abs" style="left:250px;top:298px;width:742px;height:25px;background:#000"></div><span class="t" style="left:264.30px;top:308px;font-size:10.3px;color:#ececec;">2</span><span class="t" style="left:319.30px;top:308px;font-size:10.3px;transform:scaleX(0.8792);transform-origin:0 0;color:#ececec;">ACE GOLDFINGER</span><span class="t" style="left:440.20px;top:308px;font-size:10px;color:#ececec;">A Astounding Epistle of a Database Administrator And a Explorer who must Find a Car in Ancient China</span>
<div class="abs" style="left:250px;top:323px;width:742px;height:25px;background:#070707"></div><span class="t" style="left:264.30px;top:333px;font-size:10.3px;color:#ececec;">3</span><span class="t" style="left:319.30px;top:333px;font-size:10.3px;transform:scaleX(0.9192);transform-origin:0 0;color:#ececec;">ADAPTATION HOLES</span><span class="t" style="left:440.20px;top:333px;font-size:10px;color:#ececec;">A Astounding Reflection of a Lumberjack And a Car who must Sink a Lumberjack in A Baloon Factory</span>
<div class="abs" style="left:250px;top:348px;width:742px;height:25px;background:#000"></div><span class="t" style="left:264.30px;top:358px;font-size:10.3px;color:#ececec;">4</span><span class="t" style="left:319.30px;top:358px;font-size:10.3px;transform:scaleX(0.8883);transform-origin:0 0;color:#ececec;">AFFAIR PREJUDICE</span><span class="t" style="left:440.20px;top:358px;font-size:10px;transform:scaleX(0.9930);transform-origin:0 0;color:#ececec;">A Fanciful Documentary of a Frisbee And a Lumberjack who must Chase a Monkey in A Shark Tank</span>
<div class="abs" style="left:250px;top:373px;width:742px;height:25px;background:#070707"></div><span class="t" style="left:264.30px;top:383px;font-size:10.3px;color:#ececec;">5</span><span class="t" style="left:319.30px;top:383px;font-size:10.3px;transform:scaleX(0.8837);transform-origin:0 0;color:#ececec;">AFRICAN EGG</span><span class="t" style="left:440.20px;top:383px;font-size:10px;transform:scaleX(0.9941);transform-origin:0 0;color:#ececec;">A Fast-Paced Documentary of a Pastry Chef And a Dentist who must Pursue a Forensic Psychologist in The Gulf of Mexico</span>
<div class="abs" style="left:250px;top:398px;width:742px;height:25px;background:#000"></div><span class="t" style="left:264.30px;top:408px;font-size:10.3px;color:#ececec;">6</span><span class="t" style="left:319.30px;top:408px;font-size:10.3px;transform:scaleX(0.9145);transform-origin:0 0;color:#ececec;">AGENT TRUMAN</span><span class="t" style="left:440.20px;top:408px;font-size:10px;transform:scaleX(0.9903);transform-origin:0 0;color:#ececec;">A Intrepid Panorama of a Robot And a Boy who must Escape a Sumo Wrestler in Ancient China</span>
<div class="abs" style="left:250px;top:423px;width:742px;height:25px;background:#070707"></div><span class="t" style="left:264.30px;top:433px;font-size:10.3px;color:#ececec;">7</span><span class="t" style="left:319.30px;top:433px;font-size:10.3px;transform:scaleX(0.8899);transform-origin:0 0;color:#ececec;">AIRPLANE SIERRA</span><span class="t" style="left:440.20px;top:433px;font-size:10px;color:#ececec;">A Touching Saga of a Hunter And a Butler who must Discover a Butler in A Jet Boat</span>
<div class="abs" style="left:250px;top:448px;width:742px;height:25px;background:#000"></div><span class="t" style="left:264.30px;top:458px;font-size:10.3px;color:#ececec;">8</span><span class="t" style="left:319.30px;top:458px;font-size:10.3px;transform:scaleX(0.8926);transform-origin:0 0;color:#ececec;">AIRPORT POLLOCK</span><span class="t" style="left:440.20px;top:458px;font-size:10px;color:#ececec;">A Epic Tale of a Moose And a Girl who must Confront a Monkey in Ancient India</span>
<div class="abs" style="left:250px;top:473px;width:742px;height:25px;background:#070707"></div><span class="t" style="left:264.30px;top:483px;font-size:10.3px;color:#ececec;">9</span><span class="t" style="left:319.30px;top:483px;font-size:10.3px;transform:scaleX(0.9417);transform-origin:0 0;color:#ececec;">ALABAMA DEVIL</span><span class="t" style="left:440.20px;top:483px;font-size:10px;transform:scaleX(1.0045);transform-origin:0 0;color:#ececec;">A Thoughtful Panorama of a Database Administrator And a Mad Scientist who must Outgun a Mad Scientist in A Jet Boat</span>
<div class="abs" style="left:250px;top:498px;width:742px;height:25px;background:#000"></div><span class="t" style="left:264.30px;top:508px;font-size:10.3px;color:#ececec;">10</span><span class="t" style="left:319.30px;top:508px;font-size:10.3px;transform:scaleX(0.9172);transform-origin:0 0;color:#ececec;">ALADDIN CALENDAR</span><span class="t" style="left:440.20px;top:508px;font-size:10px;transform:scaleX(0.9959);transform-origin:0 0;color:#ececec;">A Action-Packed Tale of a Man And a Lumberjack who must Reach a Feminist in Ancient China</span>
<div class="abs" style="left:250px;top:523px;width:742px;height:25px;background:#070707"></div><span class="t" style="left:264.30px;top:533px;font-size:10.3px;color:#ececec;">11</span><span class="t" style="left:319.30px;top:533px;font-size:10.3px;transform:scaleX(0.9166);transform-origin:0 0;color:#ececec;">ALAMO VIDEOTAPE</span><span class="t" style="left:440.20px;top:533px;font-size:10px;transform:scaleX(0.9894);transform-origin:0 0;color:#ececec;">A Boring Epistle of a Butler And a Cat who must Fight a Pastry Chef in A MySQL Convention</span>
<div class="abs" style="left:250px;top:548px;width:742px;height:25px;background:#000"></div><span class="t" style="left:264.30px;top:558px;font-size:10.3px;color:#ececec;">12</span><span class="t" style="left:319.30px;top:558px;font-size:10.3px;transform:scaleX(0.9394);transform-origin:0 0;color:#ececec;">ALASKA PHANTOM</span><span class="t" style="left:440.20px;top:558px;font-size:10px;transform:scaleX(0.9941);transform-origin:0 0;color:#ececec;">A Fanciful Saga of a Hunter And a Pastry Chef who must Vanquish a Boy in Australia</span>
<div class="abs" style="left:250px;top:573px;width:742px;height:25px;background:#070707"></div><span class="t" style="left:264.30px;top:583px;font-size:10.3px;color:#ececec;">13</span><span class="t" style="left:319.30px;top:583px;font-size:10.3px;transform:scaleX(0.8738);transform-origin:0 0;color:#ececec;">ALI FOREVER</span><span class="t" style="left:440.20px;top:583px;font-size:10px;transform:scaleX(0.9921);transform-origin:0 0;color:#ececec;">A Action-Packed Drama of a Dentist And a Crocodile who must Battle a Feminist in The Canadian Rockies</span>
<div class="abs" style="left:250px;top:598px;width:742px;height:25px;background:#000"></div><span class="t" style="left:264.30px;top:608px;font-size:10.3px;color:#ececec;">14</span><span class="t" style="left:319.30px;top:608px;font-size:10.3px;transform:scaleX(0.9187);transform-origin:0 0;color:#ececec;">ALICE FANTASIA</span><span class="t" style="left:440.20px;top:608px;font-size:10px;transform:scaleX(0.9939);transform-origin:0 0;color:#ececec;">A Emotional Drama of a A Shark And a Database Administrator who must Vanquish a Pioneer in Soviet Georgia</span>
<div class="abs" style="left:250px;top:623px;width:742px;height:25px;background:#070707"></div><span class="t" style="left:264.30px;top:633px;font-size:10.3px;color:#ececec;">15</span><span class="t" style="left:319.30px;top:633px;font-size:10.3px;transform:scaleX(0.8804);transform-origin:0 0;color:#ececec;">ALIEN CENTER</span><span class="t" style="left:440.20px;top:633px;font-size:10px;color:#ececec;letter-spacing:-.02px;">A Brilliant Drama of a Cat And a Mad Scientist who must Battle a Feminist in A MySQL Convention</span>

</div></div>
<div class="abs" style="left:992.300px;top:273.500px;width:7.700px;height:13.300px;background:#444;border-radius:2px"></div>
<div class="abs" style="left:250px;top:633.400px;width:750px;height:8px;background:#000"></div>
<div class="abs" style="left:250px;top:633px;width:317px;height:8.400px;background:#404040;border-radius:0 2px 2px 0"></div>
<!-- status -->
<div class="abs" style="left:0;top:641.300px;width:1000px;height:26px;background:#4fb6df"></div>
<div class="abs" style="left:0;top:641.300px;width:250px;height:26px;background:#5fcef7"></div>
<svg class="abs" style="left:11px;top:647.500px" width="14" height="14" viewBox="0 0 14 14"><circle cx="7" cy="7" r="7" fill="#111"/><path d="M3.400 7.300l2.400 2.400 4.800-5" fill="none" stroke="#5fcef7" stroke-width="1.700"/></svg>
<span class="t" style="left:34.20px;top:651px;font-size:10px;transform:scaleX(0.9276);transform-origin:0 0;color:#111a1f;font-weight:bold;">[DEV] local Sqlite</span>
<span class="t" style="left:216.00px;top:651px;font-size:9.7px;transform:scaleX(0.9724);transform-origin:0 0;color:#2c86ab;">sqlite</span>
<div class="abs" style="left:257.400px;top:644.200px;width:66.500px;height:20.400px;border-radius:5px;background:#367f9c"></div>
<span class="t" style="left:266.50px;top:650px;font-size:11.1px;transform:scaleX(0.9164);transform-origin:0 0;color:#e9f5fb;">Result 1</span>
<svg class="abs" style="left:311.800px;top:652.600px" width="6.400" height="3.300" viewBox="0 0 8 4.100"><path d="M0 0h8L4 4.100z" fill="#e9f5fb"/></svg>
<svg class="abs" style="left:335px;top:649.500px" width="10" height="9.500" viewBox="0 0 10 9.500"><path d="M.600 .600h8.800v8.300H.600zM.600 3.300h8.800M.600 6.100h8.800M3.400 .600v8.300" fill="none" stroke="#133444" stroke-width="1.350"/></svg>
<span class="t" style="left:350.00px;top:651px;font-size:10.2px;transform:scaleX(0.8998);transform-origin:0 0;color:#1a4055;">1000</span>
<svg class="abs" style="left:381.500px;top:650.800px" width="10.600" height="7" viewBox="0 0 10.600 7"><path d="M2.200 .800h8.400M1.300 3.500h8.400M.300 6.200h5.200" stroke="#133444" stroke-width="1.500" fill="none"/></svg>
<span class="t" style="left:396.60px;top:651px;font-size:10.2px;color:#1a4055;">0</span>
<svg class="abs" style="left:410px;top:646.600px" width="15.300" height="15.300" viewBox="0 0 24 24"><path fill="#133444" d="M17.650 6.350A7.958 7.958 0 0 0 12 4a8 8 0 1 0 7.730 10h-2.080A5.990 5.990 0 0 1 12 18c-3.310 0-6-2.690-6-6s2.690-6 6-6c1.660 0 3.140.69 4.220 1.780L13 11h7V4l-2.350 2.350zM11.200 8.500v4.700l3.600 2.100.7-1.150-2.900-1.700V8.500z"/></svg>
<span class="t" style="left:427.00px;top:651px;font-size:10.1px;transform:scaleX(0.9136);transform-origin:0 0;color:#1a4055;">0.045 seconds</span>
<div class="abs" style="left:916.600px;top:644.400px;width:78.600px;height:19.800px;border-radius:5px;background:#367f9c"></div>
<div class="abs" style="left:975.600px;top:644.400px;width:1px;height:19.800px;background:#2a6580"></div>
<span class="t" style="left:924.60px;top:651px;font-size:10px;transform:scaleX(0.9125);transform-origin:0 0;color:#eef7fb;font-weight:bold;">Download</span>
<svg class="abs" style="left:981.600px;top:653.200px" width="6.400" height="3.300" viewBox="0 0 8 4.100"><path d="M0 0h8L4 4.100z" fill="#eef7fb"/></svg>
</div></body></html>
